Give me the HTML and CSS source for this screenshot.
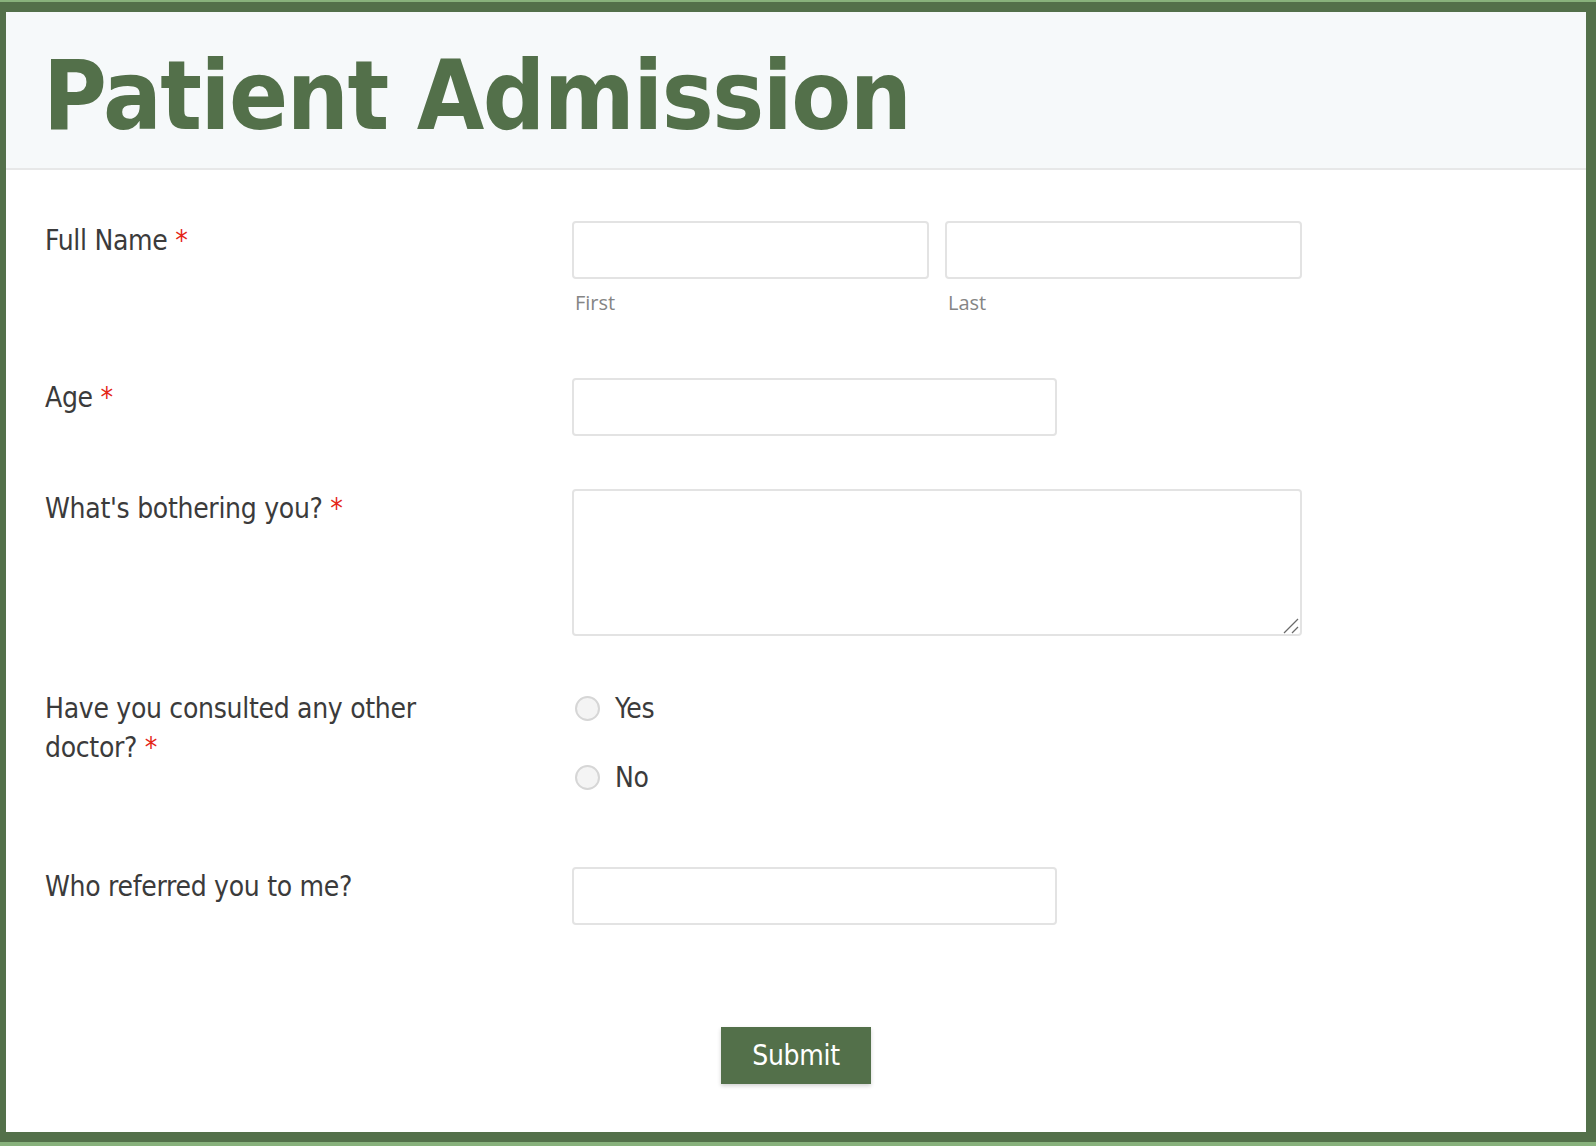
FILE: index.html
```html
<!DOCTYPE html>
<html lang="en">
<head>
<meta charset="utf-8">
<title>Patient Admission</title>
<link rel="stylesheet" href="styles.css">
</head>
<body>
<div class="frame">
  <header class="header">
    <h1 class="title">Patient Admission</h1>
  </header>
  <form class="form">
    <div class="row">
      <label class="label">Full Name <span class="req">*</span></label>
      <div class="field name-field">
        <div class="name-part">
          <input class="input" type="text">
          <span class="sublabel">First</span>
        </div>
        <div class="name-part">
          <input class="input" type="text">
          <span class="sublabel">Last</span>
        </div>
      </div>
    </div>
    <div class="row">
      <label class="label">Age <span class="req">*</span></label>
      <div class="field"><input class="input input-medium" type="text"></div>
    </div>
    <div class="row">
      <label class="label">What's bothering you? <span class="req">*</span></label>
      <div class="field textarea-wrap">
        <textarea class="textarea"></textarea>
        <svg class="grip" width="16" height="16" viewBox="0 0 16 16" aria-hidden="true">
          <line x1="1" y1="15" x2="15" y2="1" stroke="#6a6a6a" stroke-width="1.3"/>
          <line x1="9" y1="15" x2="15" y2="9" stroke="#6a6a6a" stroke-width="1.3"/>
        </svg>
      </div>
    </div>
    <div class="row">
      <div class="label label-wrap"><span>Have you consulted any other</span><br><span>doctor? <span class="req">*</span></span></div>
      <div class="field radio-group">
        <label class="option"><span class="radio"></span><span>Yes</span></label>
        <label class="option"><span class="radio"></span><span>No</span></label>
      </div>
    </div>
    <div class="row">
      <label class="label">Who referred you to me?</label>
      <div class="field"><input class="input input-medium" type="text"></div>
    </div>
    <div class="actions">
      <button class="submit" type="button">Submit</button>
    </div>
  </form>
</div>
</body>
</html>
```
FILE: styles.css
```css
html, body {
  margin: 0;
  padding: 0;
}
body {
  background: #88b27c;
  overflow: hidden;
  font-family: "DejaVu Sans Condensed", "DejaVu Sans", sans-serif;
  font-stretch: condensed;
}
.frame {
  margin: 2px 0 0 -4px;
  width: 1600px;
  height: 1140px;
  box-sizing: border-box;
  border: 10px solid #53704a;
  background: #ffffff;
  overflow: hidden;
}
.header {
  box-sizing: border-box;
  height: 158px;
  padding: 35px 0 0 37px;
  background: #f6f9fa;
  border-bottom: 2px solid #e7e8e8;
}
.title {
  margin: 0;
  font-size: 97px;
  line-height: 97px;
  font-weight: bold;
  letter-spacing: -1.45px;
  color: #53704a;
}
.form {
  padding: 51px 39px 0 39px;
}
.row {
  display: flex;
  align-items: flex-start;
  margin-bottom: 53px;
}
.label {
  width: 527px;
  flex: none;
  font-size: 28px;
  line-height: 39px;
  letter-spacing: -0.3px;
  color: #3b3b3b;
}
.label-wrap {
  box-sizing: border-box;
}
.req {
  color: #e42617;
}
.field {
  flex: none;
}
.name-field {
  display: flex;
  gap: 16px;
  padding-bottom: 10px;
}
.name-part {
  display: flex;
  flex-direction: column;
  width: 357px;
}
.input {
  box-sizing: border-box;
  width: 357px;
  height: 58px;
  border: 2px solid #e3e3e3;
  border-radius: 4px;
  background: #fff;
  margin: 0;
  outline: none;
}
.input-medium {
  width: 485px;
}
.sublabel {
  margin-top: 12px;
  padding-left: 3px;
  font-family: "Open Sans", sans-serif;
  font-stretch: normal;
  font-size: 20px;
  line-height: 24px;
  color: #858585;
}
.textarea-wrap {
  position: relative;
}
.textarea {
  display: block;
  box-sizing: border-box;
  width: 730px;
  height: 147px;
  border: 2px solid #e3e3e3;
  border-radius: 4px;
  margin: 0;
  outline: none;
  resize: none;
}
.grip {
  position: absolute;
  right: 3px;
  bottom: 2px;
}
.radio-group {
  display: flex;
  flex-direction: column;
  gap: 30px;
  padding-bottom: 17px;
}
.option {
  display: flex;
  align-items: center;
  height: 39px;
  font-size: 28px;
  letter-spacing: -0.3px;
  color: #3b3b3b;
}
.radio {
  box-sizing: border-box;
  width: 25px;
  height: 25px;
  margin-left: 3px;
  margin-right: 15px;
  border: 2px solid #d6d6d6;
  border-radius: 50%;
  background: #f4f4f4;
}
.actions {
  display: flex;
  justify-content: center;
  padding-top: 49px;
}
.submit {
  width: 150px;
  height: 57px;
  border: none;
  border-radius: 0;
  background: #53704a;
  color: #ffffff;
  font-family: "DejaVu Sans Condensed", "DejaVu Sans", sans-serif;
  font-stretch: condensed;
  font-size: 28px;
  letter-spacing: -0.3px;
  box-shadow: 0 2px 4px rgba(0, 0, 0, 0.18);
  cursor: pointer;
}
```
